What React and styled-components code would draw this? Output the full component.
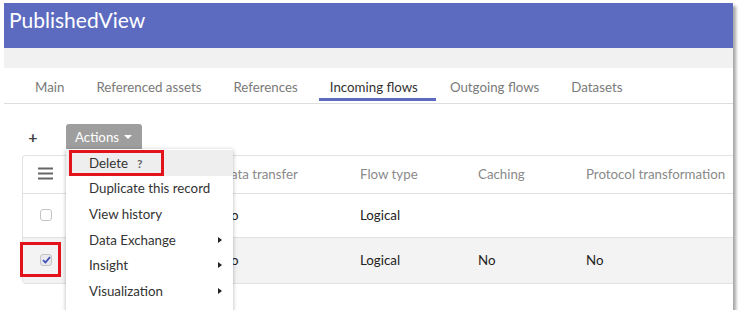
import React from "react";
import styled, { createGlobalStyle } from "styled-components";

const Global = createGlobalStyle`
  html, body { margin: 0; padding: 0; background: #fff; }
  body { font-family: Lato, "Open Sans", "Liberation Sans", sans-serif; }
  * { box-sizing: border-box; }
`;

const Window = styled.div`
  margin: 3px 0 0 4px;
  width: 729px;
  height: 307px;
  overflow: hidden;
  background: #fff;
  box-shadow: 3px 3px 3px rgba(0, 0, 0, 0.35);
  display: flex;
  flex-direction: column;
`;

const Header = styled.header`
  height: 45px;
  background: #5c6bc0;
  color: #fff;
  display: flex;
  align-items: center;
  padding: 0 0 12px 5px;
  font-size: 21px;
  flex: none;
`;

const Band = styled.div`
  height: 20px;
  background: #f1f1f1;
  flex: none;
`;

const TabBar = styled.nav`
  height: 36px;
  border-bottom: 1px solid #dedede;
  display: flex;
  align-items: stretch;
  padding-left: 15px;
  flex: none;
`;

const Tab = styled.div`
  position: relative;
  padding: 3px 16px 0;
  display: flex;
  align-items: center;
  font-size: 13.3px;
  color: ${(p) => (p.$active ? "#333" : "#7a7a7a")};
  &::after {
    content: "";
    display: ${(p) => (p.$active ? "block" : "none")};
    position: absolute;
    left: 5px;
    right: -2px;
    bottom: 2px;
    height: 3px;
    background: #5c6bc0;
  }
`;

const Content = styled.div`
  flex: 1;
  padding: 20px 0 0 18px;
  display: flex;
  flex-direction: column;
`;

const Toolbar = styled.div`
  display: flex;
  align-items: flex-start;
  height: 25px;
  gap: 22px;
  margin-left: -4px;
  position: relative;
  z-index: 2;
`;

const Plus = styled.span`
  font-size: 16px;
  color: #444;
  width: 22px;
  text-align: center;
  line-height: 25px;
  margin-left: 4px;
  font-weight: 700;
`;

const ActionsWrap = styled.div`
  position: relative;
`;

const ActionsButton = styled.div`
  height: 25px;
  width: 76px;
  background: #9e9e9e;
  color: #fff;
  border-radius: 3px 3px 0 0;
  font-size: 13.3px;
  display: flex;
  align-items: center;
  padding-left: 9px;
  gap: 5px;
`;

const Caret = styled.span`
  width: 0;
  height: 0;
  border-left: 4px solid transparent;
  border-right: 4px solid transparent;
  border-top: 4px solid #fff;
  margin-top: 1px;
`;

const Menu = styled.div`
  position: absolute;
  top: 100%;
  left: 0;
  width: 167px;
  background: #fff;
  box-shadow: 0 1px 4px rgba(0, 0, 0, 0.3);
  padding: 1px 0 30px;
`;

const MenuItem = styled.div`
  position: relative;
  height: 25.6px;
  display: flex;
  align-items: center;
  padding: 0 11px 0 23px;
  font-size: 13.3px;
  color: #333;
  background: ${(p) => (p.$hover ? "#eeeeee" : "transparent")};
`;

const Hint = styled.span`
  font-size: 12px;
  font-weight: 700;
  color: #666;
  margin-left: 9px;
  margin-top: 2px;
`;

const SubArrow = styled.span`
  margin-left: auto;
  width: 0;
  height: 0;
  border-top: 3.5px solid transparent;
  border-bottom: 3.5px solid transparent;
  border-left: 4px solid #222;
`;

const Highlight = styled.span`
  position: absolute;
  border: 3px solid #e3131b;
  left: ${(p) => p.$left}px;
  top: ${(p) => p.$top}px;
  width: ${(p) => p.$w}px;
  height: ${(p) => p.$h}px;
  pointer-events: none;
`;

const Card = styled.div`
  margin-top: 6px;
  border: 1px solid #e2e2e2;
  border-right: none;
  border-radius: 4px 0 0 4px;
  display: flex;
  flex-direction: column;
`;

const Row = styled.div`
  display: grid;
  grid-template-columns: 198px 139px 118px 108px 1fr;
  align-items: center;
  height: ${(p) => p.$h}px;
  padding-bottom: 2px;
  border-top: ${(p) => (p.$first ? "none" : "1px solid #e0e0e0")};
  background: ${(p) => (p.$selected ? "#f3f3f3" : "transparent")};
  font-size: 13.3px;
  color: ${(p) => (p.$head ? "#8a8a8a" : "#222")};
`;

const CheckCell = styled.div`
  position: relative;
  padding-left: 17px;
  display: flex;
  align-items: center;
  height: 100%;
`;

const Box = styled.span`
  width: 12px;
  height: 12px;
  border: 1px solid #c4c4c4;
  border-radius: 3px;
  background: ${(p) => (p.$checked ? "#e8e8ee" : "#fff")};
  display: flex;
  align-items: center;
  justify-content: center;
`;

const Cell = styled.div``;

const Hamburger = () => (
  <svg width="15" height="13" viewBox="0 0 15 13" style={{ marginLeft: -2 }}>
    <rect x="0" y="0.5" width="15" height="2" fill="#666" />
    <rect x="0" y="5.5" width="15" height="2" fill="#666" />
    <rect x="0" y="10.5" width="15" height="2" fill="#666" />
  </svg>
);

const Check = () => (
  <svg width="9" height="8" viewBox="0 0 9 8">
    <path d="M1 4.2 L3.4 6.5 L8 1.2" fill="none" stroke="#3f51b5" strokeWidth="1.8" />
  </svg>
);

const tabs = ["Main", "Referenced assets", "References", "Incoming flows", "Outgoing flows", "Datasets"];

export default function App() {
  return (
    <>
      <Global />
      <Window>
        <Header>PublishedView</Header>
        <Band />
        <TabBar>
          {tabs.map((t) => (
            <Tab key={t} $active={t === "Incoming flows"}>{t}</Tab>
          ))}
        </TabBar>
        <Content>
          <Toolbar>
            <Plus>+</Plus>
            <ActionsWrap>
              <ActionsButton>
                Actions <Caret />
              </ActionsButton>
              <Menu>
                <MenuItem $hover>
                  Delete<Hint>?</Hint>
                  <Highlight $left={3} $top={0} $w={95} $h={26} />
                </MenuItem>
                <MenuItem>Duplicate this record</MenuItem>
                <MenuItem>View history</MenuItem>
                <MenuItem>Data Exchange<SubArrow /></MenuItem>
                <MenuItem>Insight<SubArrow /></MenuItem>
                <MenuItem>Visualization<SubArrow /></MenuItem>
              </Menu>
            </ActionsWrap>
          </Toolbar>
          <Card>
            <Row $head $first $h={37}>
              <CheckCell><Hamburger /></CheckCell>
              <Cell>Data transfer</Cell>
              <Cell>Flow type</Cell>
              <Cell>Caching</Cell>
              <Cell>Protocol transformation</Cell>
            </Row>
            <Row $h={44}>
              <CheckCell><Box /></CheckCell>
              <Cell>No</Cell>
              <Cell>Logical</Cell>
              <Cell></Cell>
              <Cell></Cell>
            </Row>
            <Row $h={46} $selected>
              <CheckCell>
                <Box $checked><Check /></Box>
                <Highlight $left={-3} $top={4} $w={41} $h={35} />
              </CheckCell>
              <Cell>No</Cell>
              <Cell>Logical</Cell>
              <Cell>No</Cell>
              <Cell>No</Cell>
            </Row>
          </Card>
        </Content>
      </Window>
    </>
  );
}
